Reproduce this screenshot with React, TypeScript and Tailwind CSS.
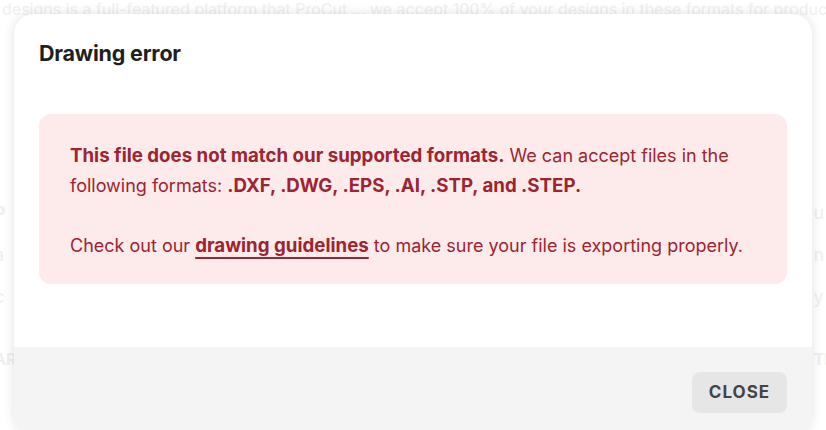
import React from "react";

export default function App() {
  return (
    <div className="relative w-[826px] h-[430px] overflow-hidden bg-white" style={{ fontFamily: "Inter, 'Noto Sans', sans-serif" }}>
      {/* faint page behind the dialog */}
      <div className="flex flex-col text-[#e6e6e6] opacity-60">
        <p className="whitespace-nowrap text-[16px] leading-[20px] -mt-[1px] pl-[2px]">designs is a full-featured platform that ProCut ... we accept 100% of your designs in these formats for production pieces</p>
        <div className="flex justify-between pt-[180px]">
          <div className="flex flex-col gap-[14px] -ml-[6px] text-[18px] leading-[28px]">
            <span className="font-bold">P</span>
            <span>a</span>
            <span>c</span>
            <span className="font-bold text-[16px] pt-[20px]">AR</span>
          </div>
          <div className="flex flex-col gap-[14px] -mr-[8px] text-[18px] leading-[28px]">
            <span>u</span>
            <span>n</span>
            <span>y</span>
            <span className="font-bold text-[16px] pt-[20px]">TE</span>
          </div>
        </div>
      </div>

      {/* dialog */}
      <div className="absolute left-[14px] top-[14px] w-[798px] h-[420px] rounded-[20px] bg-white shadow-[0_0_12px_rgba(0,0,0,0.12)] overflow-hidden flex flex-col">
        <div className="px-[25px] pt-[26px]">
          <h2 className="text-[21.5px] font-bold text-[#1f1f1f] leading-[26px] tracking-[-0.2px]">Drawing error</h2>
        </div>
        <div className="px-[25px] pt-[48px] pb-[63px]">
          <div className="rounded-[12px] bg-[#fdebec] px-[31px] pt-[27px] pb-[23px] text-[18px] leading-[30px] text-[#9b2530]">
            <p>
              <span className="font-bold text-[18.7px]">This file does not match our supported formats.</span> We can accept files in the following formats:{" "}
              <span className="font-bold text-[18.7px]">.DXF, .DWG, .EPS, .AI, .STP, and .STEP.</span>
            </p>
            <p className="mt-[30px]">
              Check out our{" "}
              <a className="font-bold text-[18.7px] underline decoration-2 underline-offset-[5px]">drawing guidelines</a> to make sure your file is exporting properly.
            </p>
          </div>
        </div>
        <div className="flex-1 bg-[#f4f4f4] flex justify-end items-start px-[25px] pt-[25px]">
          <button className="h-[41px] w-[95px] rounded-[8px] bg-[#e6e6e6] text-[17px] font-bold tracking-[1px] text-[#444]">CLOSE</button>
        </div>
      </div>
    </div>
  );
}
